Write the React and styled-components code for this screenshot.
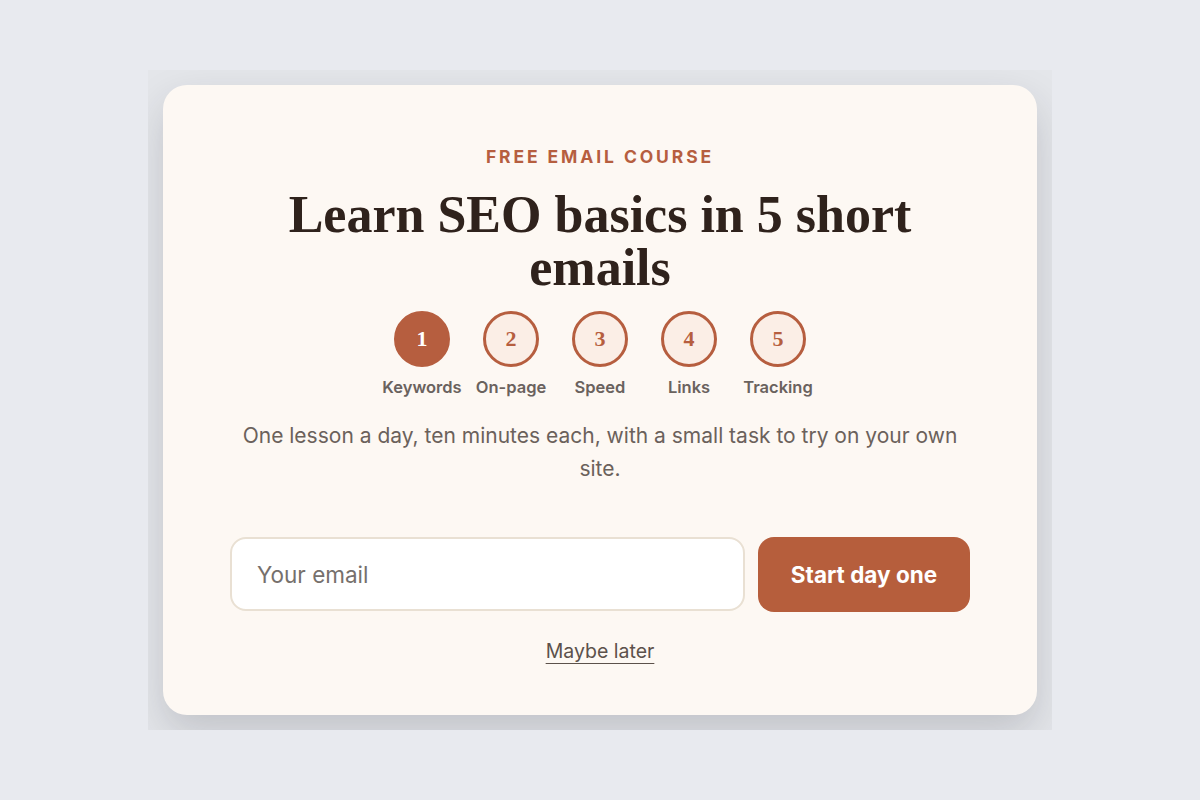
import React from "react";
import styled, { createGlobalStyle } from "styled-components";

const GlobalStyle = createGlobalStyle`
  html, body {
    margin: 0;
    padding: 0;
    background: #e8eaef;
  }
  body {
    font-family: Inter, "Liberation Sans", sans-serif;
  }
`;

const steps = ["Keywords", "On-page", "Speed", "Links", "Tracking"];

const App = () => {
  return (
    <>
      <GlobalStyle />
      <Page>
        <Frame>
          <Card>
            <Eyebrow>Free email course</Eyebrow>
            <Title>Learn SEO basics in 5 short emails</Title>
            <Steps>
              {steps.map((label, i) => (
                <Step key={label}>
                  <Circle $active={i === 0}>{i + 1}</Circle>
                  <StepLabel>{label}</StepLabel>
                </Step>
              ))}
            </Steps>
            <Description>
              One lesson a day, ten minutes each, with a small task to try on
              your own site.
            </Description>
            <Form onSubmit={(e) => e.preventDefault()}>
              <EmailInput type="email" placeholder="Your email" />
              <SubmitButton type="submit">Start day one</SubmitButton>
            </Form>
            <LaterLink href="#">Maybe later</LaterLink>
          </Card>
        </Frame>
      </Page>
    </>
  );
};

export default App;

const Page = styled.div`
  width: 1200px;
  height: 800px;
  display: flex;
  align-items: center;
  justify-content: center;
`;

const Frame = styled.div`
  width: 904px;
  height: 660px;
  padding: 15px;
  box-sizing: border-box;
  overflow: hidden;
  background: #e4e6ea;
`;

const Card = styled.div`
  height: 100%;
  box-sizing: border-box;
  background: #fdf8f3;
  border-radius: 24px;
  box-shadow: 0 18px 40px rgba(40, 40, 50, 0.18);
  padding: 62px 67px 0;
  display: flex;
  flex-direction: column;
  align-items: center;
`;

const Eyebrow = styled.div`
  font-size: 17.5px;
  font-weight: 700;
  letter-spacing: 2.9px;
  text-transform: uppercase;
  color: #b65e3f;
  line-height: 20px;
`;

const Title = styled.h1`
  margin: 21px 0 0;
  font-family: "Liberation Serif", "DejaVu Serif", serif;
  font-weight: 700;
  font-size: 52px;
  line-height: 53px;
  color: #2f221c;
  text-align: center;
  max-width: 680px;
`;

const Steps = styled.div`
  display: grid;
  grid-template-columns: repeat(5, 80px);
  column-gap: 9px;
  margin-top: 17px;
`;

const Step = styled.div`
  display: flex;
  flex-direction: column;
  align-items: center;
`;

const Circle = styled.div`
  width: 56px;
  height: 56px;
  box-sizing: border-box;
  border-radius: 50%;
  border: 3px solid #b65e3f;
  background: ${(p) => (p.$active ? "#b65e3f" : "#fbeee6")};
  color: ${(p) => (p.$active ? "#ffffff" : "#b65e3f")};
  display: flex;
  align-items: center;
  justify-content: center;
  font-family: "Liberation Serif", "DejaVu Serif", serif;
  font-weight: 700;
  font-size: 22px;
`;

const StepLabel = styled.div`
  margin-top: 10px;
  font-size: 16.5px;
  font-weight: 600;
  color: #6a625e;
  white-space: nowrap;
  line-height: 20px;
`;

const Description = styled.p`
  margin: 22px 0 0;
  font-size: 21px;
  line-height: 33px;
  color: #6b615b;
  text-align: center;
  max-width: 740px;
`;

const Form = styled.form`
  display: flex;
  gap: 13px;
  width: 740px;
  margin-top: 52px;
`;

const EmailInput = styled.input`
  flex: 1;
  height: 74px;
  box-sizing: border-box;
  border: 2px solid #e9e0d3;
  border-radius: 16px;
  background: #ffffff;
  padding: 0 25px;
  font-family: Inter, "Liberation Sans", sans-serif;
  font-size: 22.5px;
  color: #333;
  outline: none;

  &::placeholder {
    color: #76706c;
  }
`;

const SubmitButton = styled.button`
  width: 212px;
  height: 75px;
  border: none;
  border-radius: 16px;
  background: #b65e3c;
  color: #ffffff;
  font-family: Inter, "Liberation Sans", sans-serif;
  font-size: 22.5px;
  font-weight: 700;
  cursor: pointer;
`;

const LaterLink = styled.a`
  margin-top: 27px;
  font-size: 19.5px;
  color: #5c514b;
  text-decoration: underline;
  text-underline-offset: 5px;
  text-decoration-thickness: 1px;
`;
